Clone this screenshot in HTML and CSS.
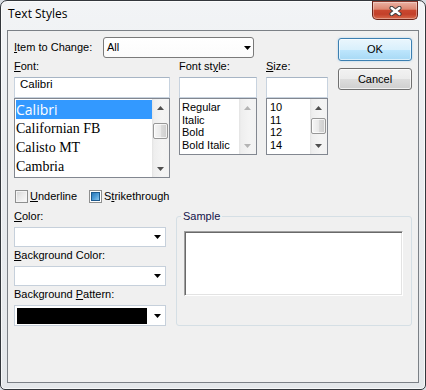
FILE: index.html
```html
<!DOCTYPE html>
<html>
<head>
<meta charset="utf-8">
<title>Text Styles</title>
<link rel="stylesheet" href="styles.css">
</head>
<body>
<div class="window">
  <div class="titlebar">
    <span class="title">Text Styles</span>
    <button class="close" aria-label="Close">
      <svg width="13" height="10" viewBox="0 0 13 10"><path d="M2.6 2 L10.4 8 M10.4 2 L2.6 8" stroke="#3f3f3f" stroke-width="4.4" stroke-linecap="round"/><path d="M2.6 2 L10.4 8 M10.4 2 L2.6 8" stroke="#fff" stroke-width="2.4" stroke-linecap="round"/></svg>
    </button>
  </div>
  <div class="client">
    <div class="top">
      <div class="main">
        <div class="item-row">
          <span class="lbl item-lbl"><u>I</u>tem to Change:</span>
          <div class="dropdown"><span>All</span><svg class="arrow" width="7" height="4" viewBox="0 0 7 4"><path d="M0 0h7L3.5 4z"/></svg></div>
        </div>
        <div class="font-cols">
          <div class="fcol col-font">
            <span class="lbl"><u>F</u>ont:</span>
            <div class="textbox">Calibri</div>
            <div class="listbox list-font">
              <ul class="items">
                <li class="fitem sel f-calibri">Calibri</li>
                <li class="fitem f-serif">Californian FB</li>
                <li class="fitem f-serif">Calisto MT</li>
                <li class="fitem f-serif">Cambria</li>
              </ul>
              <div class="scrollbar">
                <div class="sbtn"><svg width="7" height="4" viewBox="0 0 7 4"><path d="M0 4h7L3.5 0z"/></svg></div>
                <div class="track"><div class="thumb thumb-font"></div></div>
                <div class="sbtn"><svg width="7" height="4" viewBox="0 0 7 4"><path d="M0 0h7L3.5 4z"/></svg></div>
              </div>
            </div>
          </div>
          <div class="fcol col-style">
            <span class="lbl">Font st<u>y</u>le:</span>
            <div class="textbox"></div>
            <div class="listbox list-small">
              <ul class="items small-items">
                <li>Regular</li>
                <li>Italic</li>
                <li>Bold</li>
                <li>Bold Italic</li>
              </ul>
              <div class="scrollbar disabled">
                <div class="sbtn"><svg width="7" height="4" viewBox="0 0 7 4"><path d="M0 4h7L3.5 0z"/></svg></div>
                <div class="track"></div>
                <div class="sbtn"><svg width="7" height="4" viewBox="0 0 7 4"><path d="M0 0h7L3.5 4z"/></svg></div>
              </div>
            </div>
          </div>
          <div class="fcol col-size">
            <span class="lbl"><u>S</u>ize:</span>
            <div class="textbox"></div>
            <div class="listbox list-small">
              <ul class="items small-items size-items">
                <li>10</li>
                <li>11</li>
                <li>12</li>
                <li>14</li>
              </ul>
              <div class="scrollbar">
                <div class="sbtn"><svg width="7" height="4" viewBox="0 0 7 4"><path d="M0 4h7L3.5 0z"/></svg></div>
                <div class="track"><div class="thumb thumb-size"></div></div>
                <div class="sbtn"><svg width="7" height="4" viewBox="0 0 7 4"><path d="M0 0h7L3.5 4z"/></svg></div>
              </div>
            </div>
          </div>
        </div>
      </div>
      <div class="buttons">
        <button class="btn btn-default">OK</button>
        <button class="btn btn-cancel">Cancel</button>
      </div>
    </div>

    <div class="checks">
      <label class="check check-first"><span class="box"></span><span><u>U</u>nderline</span></label>
      <label class="check"><span class="box box-on"><span class="fill"></span></span><span>S<u>t</u>rikethrough</span></label>
    </div>

    <div class="lower">
      <div class="combos">
        <div class="group">
          <span class="lbl"><u>C</u>olor:</span>
          <div class="combo"><span></span><svg width="7" height="4" viewBox="0 0 7 4"><path d="M0 0h7L3.5 4z"/></svg></div>
        </div>
        <div class="group">
          <span class="lbl"><u>B</u>ackground Color:</span>
          <div class="combo"><span></span><svg width="7" height="4" viewBox="0 0 7 4"><path d="M0 0h7L3.5 4z"/></svg></div>
        </div>
        <div class="group">
          <span class="lbl">Background <u>P</u>attern:</span>
          <div class="combo combo-pattern"><span class="swatch"></span><svg width="7" height="4" viewBox="0 0 7 4"><path d="M0 0h7L3.5 4z"/></svg></div>
        </div>
      </div>
      <fieldset class="sample">
        <legend class="legend">Sample</legend>
        <div class="preview"></div>
      </fieldset>
    </div>
  </div>
</div>
</body>
</html>
```

FILE: styles.css
```css
html, body {
  margin: 0;
  padding: 0;
}
body {
  background: #d9dee4;
  font-family: "Liberation Sans", Arial, sans-serif;
  font-size: 11px;
  color: #000;
}
.window {
  width: 426px;
  height: 390px;
  box-sizing: border-box;
  border: 1px solid #33373c;
  border-radius: 7px 7px 5px 5px;
  background: linear-gradient(180deg, #f2f4f6 0%, #e9ecef 40%, #e4e7ea 100%);
  box-shadow: inset 0 0 0 1px rgba(255,255,255,0.7);
  padding: 0 6px 6px;
  display: flex;
  flex-direction: column;
}
.titlebar {
  height: 29px;
  display: flex;
  justify-content: space-between;
  align-items: flex-start;
}
.title {
  font-family: "Open Sans", "Liberation Sans", sans-serif;
  font-size: 12px;
  line-height: 16px;
  padding: 5px 0 0 1px;
  text-shadow: 0 0 5px #fff, 0 0 9px #fff;
}
.close {
  width: 46px;
  height: 19px;
  margin: 0 1px 0 0;
  padding: 0;
  box-sizing: border-box;
  border: 1px solid #6b2419;
  border-top-color: #8a3a2e;
  border-radius: 0 0 5px 5px;
  background: linear-gradient(180deg, #eab1a3 0%, #dd8772 42%, #c9472f 50%, #c3402a 72%, #d86a4c 100%);
  box-shadow: inset 0 0 0 1px rgba(255,255,255,0.35);
  display: flex;
  align-items: center;
  justify-content: center;
}
.client {
  flex: 1;
  border: 1px solid #7b8086;
  background: #f0f0f0;
  padding: 6px 6px 0 6px;
  display: flex;
  flex-direction: column;
}
.top {
  display: flex;
  gap: 10px;
}
.main {
  width: 314px;
}
.lbl {
  display: block;
  line-height: 13px;
  white-space: nowrap;
}
.item-row {
  display: flex;
  align-items: center;
  height: 21px;
}
.item-lbl {
  width: 89px;
}
.dropdown {
  width: 151px;
  height: 21px;
  box-sizing: border-box;
  border: 1px solid #7a7a7a;
  border-radius: 3px;
  background: linear-gradient(180deg, #ffffff 0%, #fbfbfb 100%);
  display: flex;
  align-items: center;
  justify-content: space-between;
  padding: 0 2px 0 3px;
  line-height: 13px;
}
.font-cols {
  display: flex;
  gap: 9px;
  margin-top: 2px;
}
.fcol {
  display: flex;
  flex-direction: column;
}
.fcol .lbl {
  margin-bottom: 4px;
}
.col-font { width: 156px; }
.col-style { width: 78px; }
.col-size { width: 62px; }
.textbox {
  height: 21px;
  box-sizing: border-box;
  border: 1px solid #c8d3df;
  border-top-color: #a7b5c5;
  background: #fff;
  padding: 0 0 0 5px;
  line-height: 13px;
  font-size: 11.5px;
}
.listbox {
  display: flex;
  box-sizing: border-box;
  border: 1px solid #828790;
  background: #fff;
}
.list-font { height: 80px; }
.list-small { height: 57px; }
.items {
  flex: 1;
  margin: 0;
  padding: 1px 0 0 1px;
  list-style: none;
  overflow: hidden;
}
.fitem {
  height: 19px;
  line-height: 19px;
  white-space: nowrap;
  padding-left: 0;
}
.f-calibri {
  font-family: "Open Sans", "Liberation Sans", sans-serif;
  font-size: 14px;
}
.f-serif {
  font-family: "Liberation Serif", "Times New Roman", serif;
  font-size: 14px;
}
.sel {
  background: #3399ff;
  color: #fff;
}
.small-items {
  padding: 2px 0 0 2px;
}
.small-items li {
  line-height: 12.7px;
  height: 12.7px;
  white-space: nowrap;
}
.size-items {
  padding-left: 3px;
}
.scrollbar {
  width: 17px;
  display: flex;
  flex-direction: column;
  background: linear-gradient(90deg, #e3e3e3 0px, #eeeeee 2px, #f4f4f4 60%, #f2f2f2 100%);
}
.sbtn {
  height: 17px;
  display: flex;
  align-items: center;
  justify-content: center;
  fill: #4f4f4f;
}
.disabled .sbtn {
  fill: #b4b4b4;
}
.track {
  flex: 1;
  display: flex;
  flex-direction: column;
}
.thumb {
  height: 16px;
  margin: 0 1px;
  box-sizing: border-box;
  border: 1px solid #979797;
  border-radius: 2px;
  background: linear-gradient(90deg, #f6f6f6 0%, #e9e9e9 50%, #dcdcdc 51%, #cdcdcd 100%);
  box-shadow: inset 0 0 0 1px rgba(255,255,255,0.7);
}
.thumb-font { margin-top: 7px; }
.thumb-size { margin-top: 2px; }
.buttons {
  width: 74px;
  display: flex;
  flex-direction: column;
  gap: 7px;
  padding-top: 1px;
}
.btn {
  font-family: "Liberation Sans", Arial, sans-serif;
  font-size: 11px;
  color: #000;
  box-sizing: border-box;
  border-radius: 3px;
  padding: 0;
  line-height: 13px;
}
.btn-default {
  height: 23px;
  border: 1px solid #3c7fb1;
  background: linear-gradient(180deg, #eaf6fd 0%, #d9f0fc 50%, #bee6fd 51%, #a7d9f5 100%);
  box-shadow: inset 0 0 0 1px rgba(255,255,255,0.6), 0 0 2px rgba(80,170,230,0.5);
}
.btn-cancel {
  height: 22px;
  border: 1px solid #707070;
  background: linear-gradient(180deg, #f2f2f2 0%, #ebebeb 50%, #dddddd 51%, #cfcfcf 100%);
  box-shadow: inset 0 0 0 1px rgba(255,255,255,0.7);
}
.checks {
  display: flex;
  align-items: center;
  height: 13px;
  margin-top: 12px;
  padding-left: 1px;
}
.check {
  display: flex;
  align-items: center;
  gap: 2px;
  line-height: 13px;
}
.check-first {
  width: 74px;
}
.box {
  width: 13px;
  height: 13px;
  box-sizing: border-box;
  border: 1px solid #8e8f8f;
  background: linear-gradient(135deg, #d4d4d4 0%, #e9e9e9 45%, #fbfbfb 100%);
  box-shadow: inset 0 0 0 1px #f4f4f4;
  display: flex;
  align-items: center;
  justify-content: center;
}
.box-on {
  background: #fff;
  box-shadow: none;
}
.fill {
  width: 9px;
  height: 9px;
  box-sizing: border-box;
  border: 1px solid #1d5a8e;
  background: linear-gradient(135deg, #2a78b8 0%, #4d9bd6 50%, #8cc7ee 100%);
}
.lower {
  display: flex;
  gap: 10px;
  margin-top: 7px;
}
.combos {
  width: 152px;
  display: flex;
  flex-direction: column;
  gap: 2px;
}
.group .lbl {
  margin-bottom: 4px;
}
.combo {
  height: 20px;
  box-sizing: border-box;
  border: 1px solid #c6d0db;
  background: #fff;
  display: flex;
  align-items: center;
  justify-content: space-between;
  padding: 0 4px 0 2px;
}
.combo-pattern {
  height: 21px;
}
.swatch {
  width: 130px;
  height: 16px;
  background: #000;
}
.sample {
  flex: 1;
  min-width: 0;
  margin: 0;
  padding: 8px 8px 4px 7px;
  border: 1px solid #d5dfe5;
  border-radius: 3px;
}
.legend {
  padding: 0 2px;
  margin-left: -3px;
  line-height: 13px;
  color: #13134a;
}
.preview {
  height: 65px;
  box-sizing: border-box;
  background: #fff;
  border: 1px solid;
  border-color: #a0a0a0 #ffffff #ffffff #a0a0a0;
  box-shadow: inset 1px 1px 0 #696969, inset -1px -1px 0 #e3e3e3;
}
```
